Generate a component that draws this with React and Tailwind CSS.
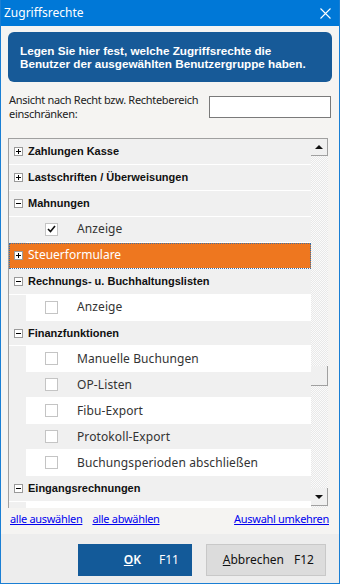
import React from "react";

const rows = [
  { type: "group", label: "Zahlungen Kasse", open: false },
  { type: "group", label: "Lastschriften / Überweisungen", open: false },
  { type: "group", label: "Mahnungen", open: true },
  { type: "item", label: "Anzeige", checked: true, alt: true },
  { type: "group", label: "Steuerformulare", open: false, selected: true },
  { type: "group", label: "Rechnungs- u. Buchhaltungslisten", open: true },
  { type: "item", label: "Anzeige" },
  { type: "group", label: "Finanzfunktionen", open: true },
  { type: "item", label: "Manuelle Buchungen" },
  { type: "item", label: "OP-Listen", alt: true },
  { type: "item", label: "Fibu-Export" },
  { type: "item", label: "Protokoll-Export", alt: true },
  { type: "item", label: "Buchungsperioden abschließen" },
  { type: "group", label: "Eingangsrechnungen", open: true },
];

const ExpandBox = ({ open }) => (
  <div className="w-[9px] h-[9px] border border-[#9a9a9a] bg-white flex items-center justify-center relative">
    <div className="w-[5px] h-px bg-black" />
    {!open && <div className="absolute w-px h-[5px] bg-black" />}
  </div>
);

const Row = ({ row }) => {
  if (row.type === "group") {
    return (
      <div
        className={`h-[26px] flex items-center border-b border-white ${
          row.selected
            ? "bg-[#ee771f] outline-1 outline-dotted outline-[#3a6ea5] -outline-offset-1"
            : "bg-[#f0f0f0]"
        }`}
      >
        <div className="w-[19px] flex justify-center">
          <ExpandBox open={row.open} />
        </div>
        <span
          className={
            row.selected
              ? "text-white text-[12px]"
              : "text-[#111] text-[11px] font-bold font-['Liberation_Sans',sans-serif]"
          }
        >
          {row.label}
        </span>
      </div>
    );
  }
  return (
    <div className="h-[26px] flex bg-[#f0f0f0]">
      <div className="w-[17px]" />
      <div
        className={`flex-1 flex items-center border-b border-white ${
          row.alt ? "bg-[#f0f0f0]" : "bg-white"
        }`}
      >
        <div className="w-[13px] h-[13px] ml-[19px] border border-[#c4c4c4] bg-white flex items-center justify-center">
          {row.checked && (
            <svg width="9" height="8" viewBox="0 0 9 8">
              <path d="M1 4 L3.5 6.5 L8 1" stroke="#111" strokeWidth="1.6" fill="none" />
            </svg>
          )}
        </div>
        <span className="ml-[19px] text-[12px] text-[#333] tracking-[0.1px]">{row.label}</span>
      </div>
    </div>
  );
};

export default function App() {
  return (
    <div className="w-[340px] h-[584px] bg-[#f5f4f2] border border-[#1a7fd4] border-t-0 flex flex-col font-['Noto_Sans',sans-serif] overflow-hidden">
      {/* title bar */}
      <div className="h-[26px] bg-[#0078d7] flex items-center justify-between pl-[4px] pr-[9px] -mx-px">
        <span className="text-white text-[12px]">Zugriffsrechte</span>
        <svg width="11" height="11" viewBox="0 0 11 11">
          <path d="M0.5 0.5 L10.5 10.5 M10.5 0.5 L0.5 10.5" stroke="white" strokeWidth="1.1" />
        </svg>
      </div>

      <div className="px-[7px] pt-[6px] flex flex-col">
        <div className="h-[50px] bg-[#175a98] rounded-[6px] px-[12px] flex items-center">
          <p className="text-white text-[11.7px] font-bold leading-[13px] font-['Liberation_Sans',sans-serif] whitespace-nowrap">
            Legen Sie hier fest, welche Zugriffsrechte die
            <br />
            Benutzer der ausgewählten Benutzergruppe haben.
          </p>
        </div>

        <div className="mt-[11px] flex items-start justify-between pl-[1px]">
          <span className="text-[11px] leading-[14px] text-[#222] whitespace-nowrap tracking-[-0.3px]">
            Ansicht nach Recht bzw. Rechtebereich
            <br />
            einschränken:
          </span>
          <div className="w-[122px] h-[22px] mt-[3px] bg-white border border-[#7a7a7a] mr-[1px]" />
        </div>

        {/* list */}
        <div className="mt-[17px] h-[370px] border-t border-l border-[#a0a0a0] flex mr-[4px]">
          <div className="flex-1 flex flex-col overflow-hidden">
            {rows.map((r, i) => (
              <Row key={i} row={r} />
            ))}
            <div className="h-[6px] flex bg-[#f0f0f0]">
              <div className="w-[17px]" />
              <div className="flex-1 bg-white" />
            </div>
          </div>
          <div className="w-[17px] flex flex-col bg-[repeating-conic-gradient(#e8e8e8_0_25%,#fbfbfb_0_50%)] bg-[length:2px_2px]">
            <div className="h-[17px] bg-[#f0f0f0] border-r border-b border-[#a0a0a0] flex items-center justify-center">
              <svg width="8" height="4" viewBox="0 0 8 4">
                <path d="M0 4 L4 0 L8 4 Z" fill="#111" />
              </svg>
            </div>
            <div className="h-[210px]" />
            <div className="h-[20px] bg-[#f0f0f0] border-r border-b border-[#a0a0a0]" />
            <div className="flex-1" />
            <div className="h-[18px] bg-[#f0f0f0] border-r border-b border-[#a0a0a0] flex items-center justify-center mb-[2px]">
              <svg width="8" height="4" viewBox="0 0 8 4">
                <path d="M0 0 L4 4 L8 0 Z" fill="#111" />
              </svg>
            </div>
          </div>
        </div>

        <div className="flex items-center mt-[3px] text-[11px] text-[#0000ee] underline pl-[2px] pr-[3px] tracking-[-0.3px]">
          <span>alle auswählen</span>
          <span className="ml-[10px]">alle abwählen</span>
          <span className="ml-auto">Auswahl umkehren</span>
        </div>
      </div>

      <div className="flex-1 bg-[#ededed] mt-[6px] flex justify-end items-start pt-[10px] pr-[13px] gap-[14px]">
        <button className="w-[114px] h-[32px] bg-[#135a99] text-white text-[12px] flex items-center justify-end pr-[13px]">
          <span className="font-semibold">
            <span className="underline">O</span>K
          </span>
          <span className="ml-[18px]">F11</span>
        </button>
        <button className="w-[120px] h-[32px] bg-[#dcdcdc] border border-[#c8c8c8] text-[#111] text-[12px] flex items-center justify-end pr-[11px]">
          <span>
            <span className="underline">A</span>bbrechen
          </span>
          <span className="ml-[10px]">F12</span>
        </button>
      </div>
    </div>
  );
}
